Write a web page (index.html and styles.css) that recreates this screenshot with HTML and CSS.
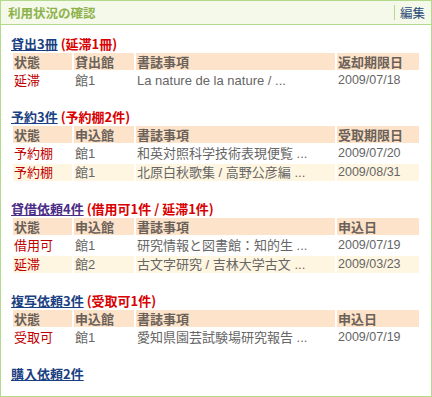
FILE: index.html
```html
<!DOCTYPE html>
<html lang="ja">
<head>
    <meta charset="UTF-8">
    <title>利用状況の確認</title>
    <link rel="stylesheet" href="styles.css">
</head>
<body>
    <div class="box">
        <div class="box-head">
            <span class="box-title">利用状況の確認</span>
            <a class="edit" href="#">編集</a>
        </div>

        <div class="box-body">
            <!-- 貸出 -->
            <h3><a href="#">貸出3冊</a> <span class="alert">(延滞1冊)</span></h3>
            <table>
                <tr>
                    <th class="c1">状態</th>
                    <th class="c2">貸出館</th>
                    <th class="c3">書誌事項</th>
                    <th class="c4">返却期限日</th>
                </tr>
                <tr>
                    <td class="st">延滞</td>
                    <td>館1</td>
                    <td>La nature de la nature / ...</td>
                    <td class="date">2009/07/18</td>
                </tr>
            </table>

            <!-- 予約 -->
            <h3><a href="#">予約3件</a> <span class="alert">(予約棚2件)</span></h3>
            <table>
                <tr>
                    <th class="c1">状態</th>
                    <th class="c2">申込館</th>
                    <th class="c3">書誌事項</th>
                    <th class="c4">受取期限日</th>
                </tr>
                <tr>
                    <td class="st">予約棚</td>
                    <td>館1</td>
                    <td>和英対照科学技術表現便覧 ...</td>
                    <td class="date">2009/07/20</td>
                </tr>
                <tr class="alt">
                    <td class="st">予約棚</td>
                    <td>館1</td>
                    <td>北原白秋歌集 / 高野公彦編 ...</td>
                    <td class="date">2009/08/31</td>
                </tr>
            </table>

            <!-- 貸借依頼 -->
            <h3><a class="visited" href="#">貸借依頼4件</a> <span class="alert">(借用可1件 / 延滞1件)</span></h3>
            <table>
                <tr>
                    <th class="c1">状態</th>
                    <th class="c2">申込館</th>
                    <th class="c3">書誌事項</th>
                    <th class="c4">申込日</th>
                </tr>
                <tr>
                    <td class="st">借用可</td>
                    <td>館1</td>
                    <td>研究情報と図書館：知的生 ...</td>
                    <td class="date">2009/07/19</td>
                </tr>
                <tr class="alt">
                    <td class="st">延滞</td>
                    <td>館2</td>
                    <td>古文字研究 / 吉林大学古文 ...</td>
                    <td class="date">2009/03/23</td>
                </tr>
            </table>

            <!-- 複写依頼 -->
            <h3><a href="#">複写依頼3件</a> <span class="alert">(受取可1件)</span></h3>
            <table>
                <tr>
                    <th class="c1">状態</th>
                    <th class="c2">申込館</th>
                    <th class="c3">書誌事項</th>
                    <th class="c4">申込日</th>
                </tr>
                <tr>
                    <td class="st">受取可</td>
                    <td>館1</td>
                    <td>愛知県園芸試験場研究報告 ...</td>
                    <td class="date">2009/07/19</td>
                </tr>
            </table>

            <!-- 購入依頼 -->
            <h3><a href="#">購入依頼2件</a></h3>
        </div>
    </div>
</body>
</html>
```

FILE: styles.css
```css
/* General styling */
body {
    margin: 0;
    font-family: "Liberation Sans", "Noto Sans CJK JP", sans-serif;
    font-size: 12px;
    color: #666;
    background: #fff;
}

.box {
    width: 432px;
    height: 397px;
    box-sizing: border-box;
    border: 1px solid #b3d98c;
    overflow: hidden;
}

/* Header bar */
.box-head {
    display: flex;
    align-items: center;
    height: 23px;
    padding: 0 6px 0 7px;
    background-color: #f4f9e9;
    border-bottom: 1px solid #b3d98c;
}

.box-title {
    flex: 1;
    font-family: "Noto Sans CJK JP", sans-serif;
    font-weight: bold;
    font-size: 12.5px;
    color: #8db24c;
}

.edit {
    font-family: "Noto Sans CJK JP", sans-serif;
    font-size: 12.5px;
    color: #2a4a78;
    text-decoration: none;
    padding-left: 5px;
    border-left: 1px solid #b3d98c;
    line-height: 15px;
}

.box-body {
    padding: 11px 10px 0 10px;
}

/* Section titles */
h3 {
    margin: 0;
    font-family: "Noto Sans CJK JP", sans-serif;
    font-size: 13px;
    font-weight: bold;
    line-height: 16px;
    height: 15px;
}

h3 a {
    color: #1a3f82;
    text-decoration: underline;
}

h3 a.visited {
    color: #4b2c86;
}

.alert {
    color: #d80000;
}

/* Tables */
table {
    width: 410px;
    table-layout: fixed;
    border-collapse: separate;
    border-spacing: 2px;
    margin-bottom: 18px;
}

th, td {
    height: 17px;
    padding: 0 1px;
    text-align: left;
    white-space: nowrap;
    overflow: hidden;
    line-height: 17px;
}

th {
    font-family: "Noto Sans CJK JP", sans-serif;
    font-size: 13px;
    color: #6b6159;
    background-color: #fde3c9;
}

td {
    font-size: 13px;
    color: #666;
}

td.date {
    font-size: 12.5px;
}

.c1 { width: 57px; }
.c2 { width: 58px; }
.c3 { width: 197px; }
.c4 { width: 80px; }

td.st {
    color: #c00000;
}

tr.alt td {
    background-color: #fff6e2;
}
```
